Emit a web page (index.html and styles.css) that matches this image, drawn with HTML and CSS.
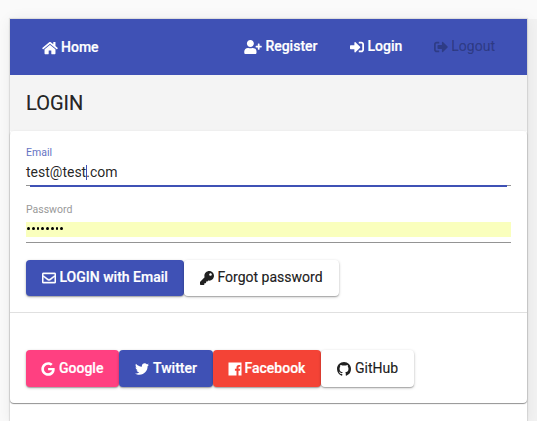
FILE: index.html
```html
<!DOCTYPE html>
<html lang="en">
<head>
<meta charset="utf-8">
<title>Login</title>
<link rel="stylesheet" href="styles.css">
</head>
<body>
<main class="panel">
  <nav class="toolbar">
    <a class="link home"><svg class="icon wide" viewBox="0 0 576 512"><path d="M488 312.7V456c0 13.3-10.7 24-24 24H348c-6.6 0-12-5.4-12-12V356c0-6.6-5.4-12-12-12h-72c-6.6 0-12 5.4-12 12v112c0 6.6-5.4 12-12 12H112c-13.3 0-24-10.7-24-24V312.7c0-3.6 1.6-7 4.4-9.3l188-154.8c4.4-3.6 10.8-3.6 15.3 0l188 154.8c2.7 2.3 4.3 5.7 4.3 9.3zm83.6-60.9L488 182.9V44.4c0-6.6-5.4-12-12-12h-56c-6.6 0-12 5.4-12 12V117l-89.5-73.7c-17.7-14.6-43.3-14.6-61 0L4.4 251.8c-5.1 4.2-5.8 11.8-1.6 16.9l25.5 31c4.2 5.1 11.8 5.8 16.9 1.6l235.2-193.7c4.4-3.6 10.8-3.6 15.3 0l235.2 193.7c5.1 4.2 12.7 3.5 16.9-1.6l25.5-31c4.2-5.2 3.4-12.7-1.7-16.9z"/></svg><span>Home</span></a>
    <a class="link"><svg class="icon wider" viewBox="0 0 640 512"><path d="M624 208h-64v-64c0-8.8-7.2-16-16-16h-32c-8.8 0-16 7.2-16 16v64h-64c-8.8 0-16 7.2-16 16v32c0 8.8 7.2 16 16 16h64v64c0 8.8 7.2 16 16 16h32c8.8 0 16-7.2 16-16v-64h64c8.8 0 16-7.2 16-16v-32c0-8.8-7.2-16-16-16zm-400 48c70.7 0 128-57.3 128-128S294.7 0 224 0 96 57.3 96 128s57.3 128 128 128zm89.6 32h-16.7c-22.2 10.2-46.9 16-72.9 16s-50.6-5.8-72.9-16h-16.7C60.2 288 0 348.2 0 422.4V464c0 26.5 21.5 48 48 48h352c26.5 0 48-21.5 48-48v-41.6c0-74.2-60.2-134.4-134.4-134.4z"/></svg><span>Register</span></a>
    <a class="link login"><svg class="icon" viewBox="0 0 512 512"><path d="M416 448h-84c-6.6 0-12-5.4-12-12v-40c0-6.6 5.4-12 12-12h84c17.7 0 32-14.3 32-32V160c0-17.7-14.3-32-32-32h-84c-6.6 0-12-5.4-12-12V76c0-6.6 5.4-12 12-12h84c53 0 96 43 96 96v192c0 53-43 96-96 96zm-47-201L201 79c-15-15-41-4.5-41 17v96H24c-13.3 0-24 10.7-24 24v96c0 13.3 10.7 24 24 24h136v96c0 21.5 26 32 41 17l168-168c9.3-9.4 9.3-24.6 0-34z"/></svg><span>Login</span></a>
    <a class="link disabled"><svg class="icon" viewBox="0 0 512 512"><path d="M497 273L329 441c-15 15-41 4.5-41-17v-96H152c-13.3 0-24-10.7-24-24v-96c0-13.3 10.7-24 24-24h136V88c0-21.4 25.9-32 41-17l168 168c9.3 9.4 9.3 24.6 0 34zM192 436v-40c0-6.6-5.4-12-12-12H96c-17.7 0-32-14.3-32-32V160c0-17.7 14.3-32 32-32h84c6.6 0 12-5.4 12-12V76c0-6.6-5.4-12-12-12H96c-53 0-96 43-96 96v192c0 53 43 96 96 96h84c6.6 0 12-5.4 12-12z"/></svg><span>Logout</span></a>
  </nav>
  <h1 class="title">LOGIN</h1>
  <section class="card">
    <form class="form">
      <div class="field focused">
        <div class="label">Email</div>
        <div class="value">test@test<i class="caret"></i>.com</div>
      </div>
      <div class="field">
        <div class="label">Password</div>
        <div class="value secret"><i></i><i></i><i></i><i></i><i></i><i></i><i></i><i></i></div>
      </div>
      <div class="actions">
        <a class="btn primary email"><svg class="icon outlined" viewBox="0 0 512 512"><path d="M464 64H48C21.49 64 0 85.49 0 112v288c0 26.51 21.49 48 48 48h416c26.51 0 48-21.49 48-48V112c0-26.51-21.49-48-48-48zm0 48v40.805c-22.422 18.259-58.168 46.651-134.587 106.49-16.841 13.247-50.201 45.072-73.413 44.701-23.208.375-56.579-31.459-73.413-44.701C106.18 199.465 70.425 171.067 48 152.805V112h416zM48 400V214.398c22.914 18.251 55.409 43.862 104.938 82.646 21.857 17.205 60.134 55.186 103.062 54.955 42.717.231 80.509-37.199 103.053-54.947 49.528-38.783 82.032-64.401 104.947-82.653V400H48z"/></svg><span>LOGIN with Email</span></a>
        <a class="btn forgot"><svg class="icon" viewBox="0 0 512 512"><path d="M512 176.001C512 273.203 433.202 352 336 352c-11.22 0-22.19-1.062-32.827-3.069l-24.012 27.014A23.999 23.999 0 0 1 261.223 384H224v40c0 13.255-10.745 24-24 24h-40v40c0 13.255-10.745 24-24 24H24c-13.255 0-24-10.745-24-24v-78.059c0-6.365 2.529-12.47 7.029-16.971l161.802-161.802C163.108 213.814 160 195.271 160 176 160 78.798 238.797.001 335.999 0 433.488-.001 512 78.511 512 176.001zM336 128c0 26.51 21.49 48 48 48s48-21.49 48-48-21.49-48-48-48-48 21.49-48 48z"/></svg><span>Forgot password</span></a>
      </div>
    </form>
    <div class="social">
      <a class="btn pink google"><svg class="icon" viewBox="0 0 488 512"><path d="M488 261.8C488 403.3 391.1 504 248 504 110.8 504 0 393.2 0 256S110.8 8 248 8c66.8 0 123 24.5 166.3 64.9l-67.5 64.9C258.5 52.6 94.3 116.6 94.3 256c0 86.5 69.1 156.6 153.7 156.6 98.2 0 135-70.4 140.8-106.9H248v-85.3h236.1c2.3 12.7 3.9 24.9 3.9 41.4z"/></svg><span>Google</span></a>
      <a class="btn primary twitter"><svg class="icon" viewBox="0 0 512 512"><path d="M459.37 151.716c.325 4.548.325 9.097.325 13.645 0 138.72-105.583 298.558-298.558 298.558-59.452 0-114.68-17.219-161.137-47.106 8.447.974 16.568 1.299 25.34 1.299 49.055 0 94.213-16.568 130.274-44.832-46.132-.975-84.792-31.188-98.112-72.772 6.498.974 12.995 1.624 19.818 1.624 9.421 0 18.843-1.3 27.614-3.573-48.081-9.747-84.143-51.98-84.143-102.985v-1.299c13.969 7.797 30.214 12.67 47.431 13.319-28.264-18.843-46.781-51.005-46.781-87.391 0-19.492 5.197-37.36 14.294-52.954 51.655 63.675 129.3 105.258 216.365 109.807-1.624-7.797-2.599-15.918-2.599-24.04 0-57.828 46.782-104.934 104.934-104.934 30.213 0 57.502 12.67 76.67 33.137 23.715-4.548 46.456-13.32 66.599-25.34-7.798 24.366-24.366 44.833-46.132 57.827 21.117-2.273 41.584-8.122 60.426-16.243-14.292 20.791-32.161 39.308-52.628 54.253z"/></svg><span>Twitter</span></a>
      <a class="btn red facebook"><svg class="icon" viewBox="0 0 14 14"><path d="M.5.5h13v13h-3V8.8h1.4l.3-2h-1.7V5.6c0-.6.3-.9.9-.9h.9V2.9h-1.5c-1.5 0-2.3.9-2.3 2.4v1.5H6.9v2h1.6v4.7h-8z"/></svg><span>Facebook</span></a>
      <a class="btn github"><svg class="icon" viewBox="0 0 16 16"><path d="M8 0C3.58 0 0 3.58 0 8c0 3.54 2.29 6.53 5.47 7.59.4.07.55-.17.55-.38 0-.19-.01-.82-.01-1.49-2.01.37-2.53-.49-2.69-.94-.09-.23-.48-.94-.82-1.13-.28-.15-.68-.52-.01-.53.63-.01 1.08.58 1.23.82.72 1.21 1.87.87 2.33.66.07-.52.28-.87.51-1.07-1.78-.2-3.64-.89-3.64-3.95 0-.87.31-1.59.82-2.15-.08-.2-.36-1.02.08-2.12 0 0 .67-.21 2.2.82.64-.18 1.32-.27 2-.27s1.36.09 2 .27c1.53-1.04 2.2-.82 2.2-.82.44 1.1.16 1.92.08 2.12.51.56.82 1.27.82 2.15 0 3.07-1.87 3.75-3.65 3.95.29.25.54.73.54 1.48 0 1.07-.01 1.93-.01 2.2 0 .21.15.46.55.38A8.01 8.01 0 0 0 16 8c0-4.42-3.58-8-8-8z"/></svg><span>GitHub</span></a>
    </div>
  </section>
</main>
</body>
</html>
```
FILE: styles.css
```css
* { box-sizing: border-box; }
html { height: 100%; overflow: hidden; background: linear-gradient(#fafafa 19px, #f2f2f2 19px); }
body {
  height: 421px;
  margin: 0;
  padding: 19px 10px 0;
  overflow: hidden;
  background: linear-gradient(90deg, #fafafa 10px, transparent 10px);
  font: 500 14px/20px Roboto, sans-serif;
  color: rgba(0, 0, 0, .87);
}
.panel {
  height: 402px;
  background: #fff;
  box-shadow: 0 0 1px 1px rgba(0, 0, 0, .09), 0 1px 14px rgba(0, 0, 0, .07);
}
.toolbar {
  display: flex;
  align-items: center;
  height: 56px;
  padding: 0 32px;
  background: #3f51b5;
  color: #fff;
}
.link, .btn { display: flex; align-items: center; gap: 3px; white-space: nowrap; }
.link { margin-left: 32px; padding-bottom: 2px; }
.link span, .btn span { -webkit-text-stroke: .2px; }
.home { margin: 0 auto 0 0; padding: 0; }
.login { gap: 4px; }
.disabled { color: rgba(0, 0, 0, .26); font-weight: 400; }
.icon { flex: none; width: 14px; height: 14px; margin-top: 2px; fill: currentColor; }
.wide { width: 16px; }
.wider { width: 18px; }
.outlined { stroke: currentColor; stroke-width: 14; }
.title {
  height: 56px;
  margin: 0;
  padding: 0 16px;
  background: #f4f4f4;
  font-size: 20px;
  font-weight: 400;
  line-height: 57px;
  -webkit-text-stroke: .2px;
}
.card {
  height: 272px;
  border-radius: 4px;
  background: #fff;
  box-shadow: 0 1px 1px rgba(0, 0, 0, .42), 0 0 2px rgba(0, 0, 0, .08);
}
.form { height: 182px; padding: 14px 16px 0; border-bottom: 1px solid #e0e0e0; }
.field { height: 57px; font-weight: 400; }
.label { height: 15px; font-size: 10.5px; line-height: 15px; color: #999; }
.value { height: 26px; border-bottom: 1px solid #949494; line-height: 25px; }
.focused .label { color: #6573c3; }
.focused .value { position: relative; }
.focused .value::after {
  content: "";
  position: absolute;
  right: 4px;
  bottom: -2px;
  left: 4px;
  height: 2px;
  background: #3f51b5;
}
.caret { display: inline-block; width: 1px; height: 15px; margin-right: -1px; background: #3f51b5; vertical-align: -3px; }
.secret {
  display: flex;
  gap: 2px;
  padding: 10px 0 0 1px;
  background: linear-gradient(transparent 5px, #faffbd 5px, #faffbd 20px, transparent 20px);
}
.secret i { width: 2.75px; height: 3px; border-radius: 50%; background: #000; }
.actions { display: flex; padding-top: 1px; }
.social { display: flex; padding: 37px 16px 0; }
.btn {
  height: 36px;
  gap: 3.5px;
  padding: 0 0 2px 16px;
  border-radius: 4px;
  background: #fff;
  box-shadow: 0 1px 3px rgba(0, 0, 0, .25), 0 1px 1px rgba(0, 0, 0, .2);
}
.social .btn { height: 37px; gap: 4px; }
.social .icon { margin-top: 3px; }
.primary { background: #3f51b5; color: #fff; }
.pink { background: #ff4081; color: #fff; }
.red { background: #f44336; color: #fff; }
.forgot, .github { font-weight: 400; }
.email { width: 158px; }
.forgot { width: 155px; }
.google { width: 93px; padding-left: 15px; }
.twitter { width: 94px; }
.facebook { width: 108px; padding-left: 15px; }
.social .facebook { gap: 2.5px; }
.github { width: 93px; }
```
